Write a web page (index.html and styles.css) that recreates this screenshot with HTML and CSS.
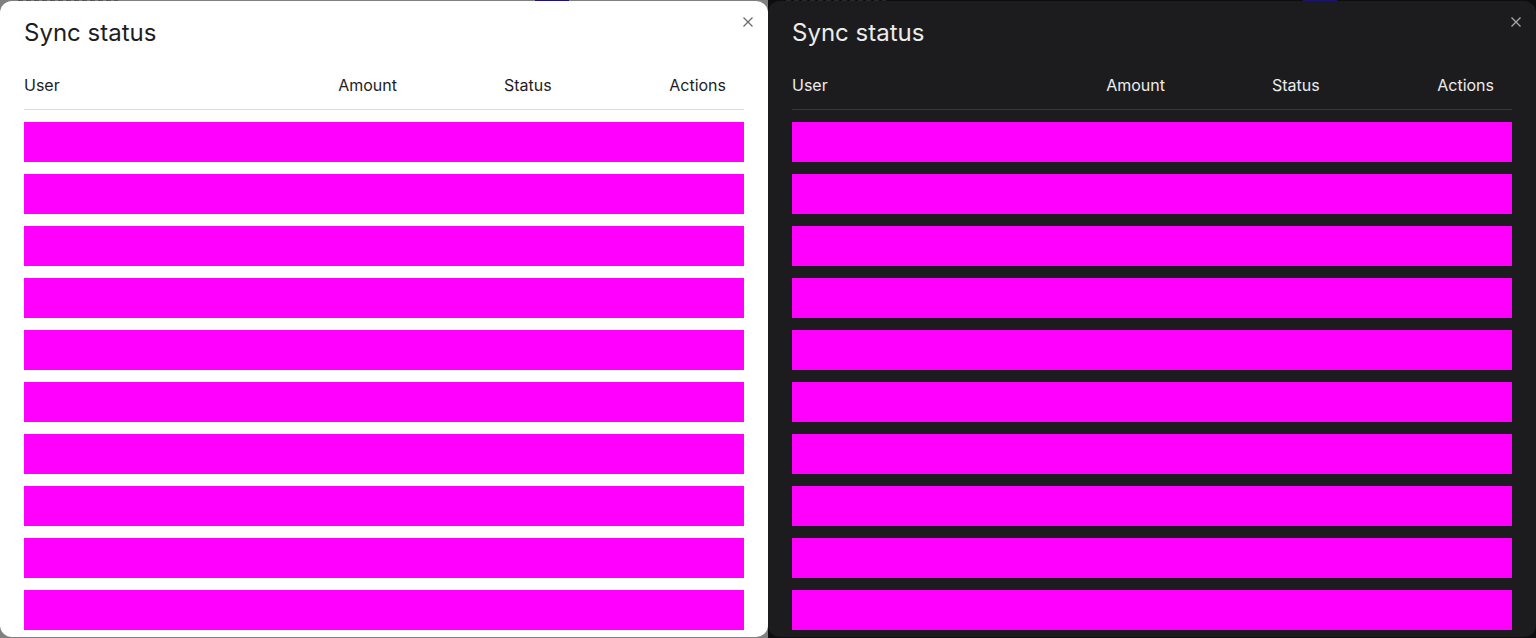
FILE: index.html
```html
<!DOCTYPE html>
<html lang="en">
<head>
<meta charset="utf-8">
<title>Sync status</title>
<link rel="stylesheet" href="styles.css">
</head>
<body>
<div class="stage">
  <section class="panel panel-light">
    <div class="peek"><span class="peek-text"></span><span class="peek-badge"></span></div>
    <div class="dialog">
      <button class="close" aria-label="Close">
        <svg width="12" height="12" viewBox="0 0 12 12"><path d="M1.5 1.5 L10.5 10.5 M10.5 1.5 L1.5 10.5" /></svg>
      </button>
      <h2 class="title">Sync status</h2>
      <div class="table">
        <div class="thead">
          <div class="th th-user">User</div>
          <div class="th th-amount">Amount</div>
          <div class="th th-status">Status</div>
          <div class="th th-actions">Actions</div>
        </div>
        <div class="tbody">
          <div class="row"></div><div class="row"></div><div class="row"></div><div class="row"></div><div class="row"></div>
          <div class="row"></div><div class="row"></div><div class="row"></div><div class="row"></div><div class="row"></div>
        </div>
      </div>
    </div>
  </section>
  <section class="panel panel-dark">
    <div class="peek"><span class="peek-text"></span><span class="peek-badge"></span></div>
    <div class="dialog">
      <button class="close" aria-label="Close">
        <svg width="12" height="12" viewBox="0 0 12 12"><path d="M1.5 1.5 L10.5 10.5 M10.5 1.5 L1.5 10.5" /></svg>
      </button>
      <h2 class="title">Sync status</h2>
      <div class="table">
        <div class="thead">
          <div class="th th-user">User</div>
          <div class="th th-amount">Amount</div>
          <div class="th th-status">Status</div>
          <div class="th th-actions">Actions</div>
        </div>
        <div class="tbody">
          <div class="row"></div><div class="row"></div><div class="row"></div><div class="row"></div><div class="row"></div>
          <div class="row"></div><div class="row"></div><div class="row"></div><div class="row"></div><div class="row"></div>
        </div>
      </div>
    </div>
  </section>
</div>
</body>
</html>
```
FILE: styles.css
```css
* { box-sizing: border-box; }
html, body { margin: 0; padding: 0; }
body {
  font-family: Inter, "Noto Sans", "Liberation Sans", sans-serif;
  width: 1536px;
  height: 638px;
  overflow: hidden;
}
.stage {
  display: grid;
  grid-template-columns: 768px 768px;
  height: 638px;
}
.panel {
  position: relative;
  height: 638px;
  overflow: hidden;
  padding-top: 1px;
}
.panel-light { background: #808080; }
.panel-dark { background: #0d0d0e; }

.peek {
  position: absolute;
  top: 0;
  left: 0;
  right: 0;
  height: 1px;
}
.peek-text {
  position: absolute;
  left: 18px;
  top: 0;
  width: 100px;
  height: 1px;
  background: repeating-linear-gradient(90deg, #3a3a3a 0 5px, transparent 5px 8px);
  opacity: 0.6;
}
.peek-badge {
  position: absolute;
  left: 535px;
  top: 0;
  width: 34px;
  height: 1px;
  background: #1a1470;
}

.dialog {
  position: relative;
  height: 636px;
  border-radius: 12px;
  padding: 17px 24px 0 24px;
  display: flex;
  flex-direction: column;
  overflow: hidden;
}
.panel-light .dialog { background: #ffffff; color: #1d1d1f; }
.panel-dark .dialog { background: #1c1c1e; color: #ececec; }

.close {
  position: absolute;
  top: 15px;
  right: 14px;
  width: 12px;
  height: 12px;
  padding: 0;
  border: 0;
  background: none;
  display: flex;
}
.close svg path { stroke-width: 1.3; fill: none; }
.panel-light .close svg path { stroke: #6b6b6b; }
.panel-dark .close svg path { stroke: #a8a8a8; }

.title {
  margin: 0;
  font-size: 24px;
  font-weight: 400;
  line-height: 30px;
  letter-spacing: 0;
}

.table {
  margin-top: 23px;
  display: flex;
  flex-direction: column;
}
.thead {
  display: grid;
  grid-template-columns: 273px 100px 209px 120px 18px;
  height: 39px;
  align-items: center;
  padding-bottom: 10px;
  font-size: 16px;
  line-height: 20px;
}
.panel-light .thead { border-bottom: 1px solid #dedede; }
.panel-dark .thead { border-bottom: 1px solid #3a3a3c; }
.th-amount { text-align: right; }
.th-status { padding-left: 107px; }
.th-actions { text-align: right; }

.tbody {
  display: flex;
  flex-direction: column;
  gap: 12px;
  margin-top: 12px;
}
.row {
  height: 40px;
  background: #ff00ff;
}
```
